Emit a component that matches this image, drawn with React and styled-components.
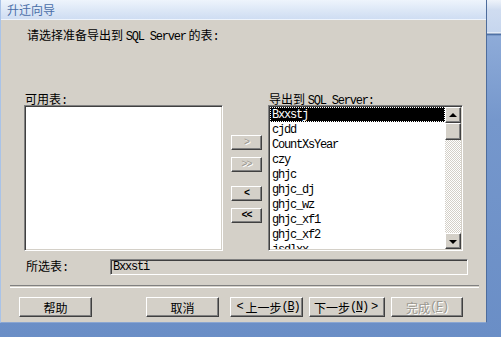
import React from 'react'
import styled, { createGlobalStyle } from 'styled-components'

const GlobalStyle = createGlobalStyle`
  html, body {
    margin: 0;
    padding: 0;
  }
  body {
    width: 501px;
    height: 337px;
    overflow: hidden;
    font-family: "Noto Sans CJK SC", "Liberation Sans", sans-serif;
    font-size: 12px;
    color: #000;
  }
`

const Desktop = styled.div`
  width: 501px;
  height: 337px;
  background: linear-gradient(
    to bottom,
    #eef3fa 0,
    #cfdcf0 10px,
    #c6d6ee 32px,
    #ffffff 33px,
    #3b5f96 34px,
    #8eabd8 36px,
    #7597cc 120px,
    #6a8ec6 337px
  );
`

const Window = styled.div`
  width: 487px;
  height: 323px;
  box-sizing: border-box;
  background: #d4d0c8;
  border-left: 1px solid #a9c3e8;
  border-right: 1px solid #4d6c9c;
  border-bottom: 1px solid #8aa6d2;
  display: flex;
  flex-direction: column;
`

const TitleBar = styled.div`
  height: 19px;
  border-bottom: 1px solid #eef4fc;
  background: linear-gradient(to bottom, #eef4fc 0%, #dce7f6 55%, #cfddf2 100%);
  padding-left: 6px;
  line-height: 19px;
  color: #4a6ea8;
  font-size: 12px;
`

const Body = styled.div`
  flex: 1;
  display: flex;
  flex-direction: column;
  padding-left: 23px;
`

const Lat = styled.span`
  font-family: "Liberation Mono", monospace;
  letter-spacing: -1.2px;
`

const Header = styled.div`
  margin-top: 9px;
  margin-left: 3px;
  line-height: 12px;
  height: 12px;
`

const ListsRow = styled.div`
  margin-top: 52px;
  display: flex;
  align-items: flex-start;
`

const Column = styled.div`
  display: flex;
  flex-direction: column;
  width: ${p => p.$w}px;
`

const Label = styled.div`
  line-height: 12px;
  height: 12px;
  padding-left: 1px;
  white-space: nowrap;
`

const Sunken = styled.div`
  box-sizing: border-box;
  border: 1px solid;
  border-color: #808080 #ffffff #ffffff #808080;
  box-shadow: inset 1px 1px #404040, inset -1px -1px #d4d0c8;
`

const ListBox = styled(Sunken)`
  height: 146px;
  background: #fff;
  padding: 1px;
  display: flex;
  overflow: hidden;
`

const Items = styled.div`
  flex: 1;
  overflow: hidden;
`

const Item = styled.div`
  height: 15px;
  line-height: 16px;
  padding-left: 2px;
  font-family: "Liberation Mono", monospace;
  letter-spacing: -1.2px;
  white-space: nowrap;
  background: ${p => (p.$selected ? '#000' : 'transparent')};
  color: ${p => (p.$selected ? '#fff' : '#000')};
  outline: ${p => (p.$selected ? '1px dotted #fff' : 'none')};
  outline-offset: -1px;
`

const ScrollBar = styled.div`
  width: 16px;
  display: flex;
  flex-direction: column;
`

const Raised = styled.div`
  box-sizing: border-box;
  border: 1px solid;
  border-color: #ffffff #404040 #404040 #ffffff;
  box-shadow: inset -1px -1px #808080, inset 1px 1px #d4d0c8;
  background: #d4d0c8;
`

const ScrollBtn = styled(Raised)`
  height: 16px;
  display: flex;
  align-items: center;
  justify-content: center;
`

const Thumb = styled(Raised)`
  height: 17px;
`

const Track = styled.div`
  flex: 1;
  background-image: conic-gradient(#d4d0c8 25%, #ffffff 0 50%, #d4d0c8 0 75%, #ffffff 0);
  background-size: 2px 2px;
`

const Arrow = styled.div`
  width: 0;
  height: 0;
  border-left: 4px solid transparent;
  border-right: 4px solid transparent;
  ${p =>
    p.$down
      ? 'border-top: 4px solid #000; margin-top: 1px;'
      : 'border-bottom: 4px solid #000; margin-top: -1px;'}
`

const MoveColumn = styled.div`
  width: 31px;
  margin: 0 6px 0 8px;
  padding-top: 42px;
  display: flex;
  flex-direction: column;
`

const MoveBtn = styled(Raised)`
  height: 15px;
  margin-top: ${p => p.$gap || 0}px;
  display: flex;
  align-items: center;
  justify-content: center;
  font-family: "Liberation Mono", monospace;
  font-size: 10px;
  font-weight: ${p => (p.$disabled ? 'normal' : 'bold')};
  letter-spacing: -1px;
  color: ${p => (p.$disabled ? '#9a978f' : '#000')};
  text-shadow: ${p => (p.$disabled ? '1px 1px #fff' : 'none')};
`

const SelectedRow = styled.div`
  margin-top: 8px;
  display: flex;
  align-items: center;
`

const SelectedLabel = styled.div`
  width: 84px;
  padding-left: 2px;
  line-height: 12px;
`

const Field = styled(Sunken)`
  width: 358px;
  height: 16px;
  padding: 0 2px;
  line-height: 14px;
  font-family: "Liberation Mono", monospace;
  letter-spacing: -1.2px;
`

const Separator = styled.div`
  margin: 10px 0 0 -14px;
  width: 469px;
  height: 1px;
  border-top: 1px solid #808080;
  border-bottom: 1px solid #ffffff;
`

const ButtonRow = styled.div`
  margin: 9px 0 0 -5px;
  display: flex;
`

const Button = styled(Raised)`
  width: ${p => p.$w || 73}px;
  height: 20px;
  margin-left: ${p => p.$gap || 0}px;
  display: flex;
  align-items: center;
  justify-content: center;
  white-space: nowrap;
  color: ${p => (p.$disabled ? '#9a978f' : '#000')};
  text-shadow: ${p => (p.$disabled ? '1px 1px #fff' : 'none')};
`

const Key = styled.span`
  font-family: "Liberation Mono", monospace;
  letter-spacing: -1.2px;
  margin: 0 ${p => p.$pad || 0}px;
  u {
    text-underline-offset: 1px;
  }
`

const tables = [
  'Bxxstj',
  'cjdd',
  'CountXsYear',
  'czy',
  'ghjc',
  'ghjc_dj',
  'ghjc_wz',
  'ghjc_xf1',
  'ghjc_xf2',
  'jsdlxx'
]

export default function App() {
  return (
    <>
      <GlobalStyle />
      <Desktop>
        <Window>
          <TitleBar>升迁向导</TitleBar>
          <Body>
            <Header>
              请选择准备导出到 <Lat>SQL Server</Lat> 的表<Lat>:</Lat>
            </Header>
            <ListsRow>
              <Column $w={199}>
                <Label>
                  可用表<Lat>:</Lat>
                </Label>
                <ListBox />
              </Column>
              <MoveColumn>
                <MoveBtn $disabled>&gt;</MoveBtn>
                <MoveBtn $disabled $gap={7}>&gt;&gt;</MoveBtn>
                <MoveBtn $gap={14}>&lt;</MoveBtn>
                <MoveBtn $gap={7}>&lt;&lt;</MoveBtn>
              </MoveColumn>
              <Column $w={195}>
                <Label>
                  导出到 <Lat>SQL Server:</Lat>
                </Label>
                <ListBox>
                  <Items>
                    {tables.map((t, i) => (
                      <Item key={t} $selected={i === 0}>
                        {t}
                      </Item>
                    ))}
                  </Items>
                  <ScrollBar>
                    <ScrollBtn>
                      <Arrow />
                    </ScrollBtn>
                    <Thumb />
                    <Track />
                    <ScrollBtn>
                      <Arrow $down />
                    </ScrollBtn>
                  </ScrollBar>
                </ListBox>
              </Column>
            </ListsRow>
            <SelectedRow>
              <SelectedLabel>
                所选表<Lat>:</Lat>
              </SelectedLabel>
              <Field>Bxxsti</Field>
            </SelectedRow>
            <Separator />
            <ButtonRow>
              <Button>帮助</Button>
              <Button $gap={54}>取消</Button>
              <Button $gap={11}>
                <Key $pad={3}>&lt;</Key>上一步<Key>(<u>B</u>)</Key>
              </Button>
              <Button $gap={6} $w={76}>
                下一步<Key>(<u>N</u>)</Key>
                <Key $pad={3}>&gt;</Key>
              </Button>
              <Button $gap={6} $w={72} $disabled>
                完成<Key>(<u>F</u>)</Key>
              </Button>
            </ButtonRow>
          </Body>
        </Window>
      </Desktop>
    </>
  )
}
